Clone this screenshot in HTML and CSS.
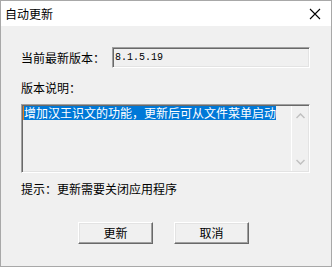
FILE: index.html
```html
<!DOCTYPE html>
<html lang="zh">
<head>
<meta charset="utf-8">
<link rel="stylesheet" href="styles.css">
</head>
<body>
<div class="window">
  <div class="titlebar">
    <span class="title">自动更新</span>
    <svg class="close" width="12" height="12" viewBox="0 0 12 12"><path d="M1 1L11 11M11 1L1 11" stroke="#000" stroke-width="1.1"/></svg>
  </div>
  <div class="content">
    <div class="row">
      <span class="label">当前最新版本：</span>
      <div class="field">8.1.5.19</div>
    </div>
    <div class="line">版本说明：</div>
    <div class="memo">
      <div class="memo-text"><span class="sel">增加汉王识文的功能，更新后可从文件菜单启动</span></div>
      <div class="scroll">
        <svg width="9" height="6" viewBox="0 0 9 6"><path d="M0.5 5L4.5 1L8.5 5" fill="none" stroke="#c0c0c0" stroke-width="1.5"/></svg>
        <svg width="9" height="6" viewBox="0 0 9 6"><path d="M0.5 1L4.5 5L8.5 1" fill="none" stroke="#c0c0c0" stroke-width="1.5"/></svg>
      </div>
    </div>
    <div class="line hint">提示：更新需要关闭应用程序</div>
    <div class="buttons">
      <div class="btn">更新</div>
      <div class="btn">取消</div>
    </div>
  </div>
</div>
</body>
</html>
```
FILE: styles.css
```css
* { box-sizing: border-box; }
html, body { margin: 0; padding: 0; }
body {
  width: 332px;
  height: 267px;
  font-family: "Noto Sans CJK SC", "Noto Sans", sans-serif;
  font-size: 12px;
  color: #000;
}
.window {
  width: 332px;
  height: 267px;
  border: 1px solid #a8a8a8;
  background: #f0f0f0;
  display: flex;
  flex-direction: column;
}
.titlebar {
  height: 25px;
  background: #fff;
  display: flex;
  align-items: center;
  justify-content: space-between;
  padding: 0 10px 0 4px;
  flex: none;
}
.title { font-size: 12px; line-height: 16px; }
.close { display: block; }
.content {
  padding: 21px 0 0 20px;
}
.row {
  display: flex;
  align-items: center;
  height: 21px;
}
.label {
  width: 91px;
  line-height: 16px;
}
.field {
  width: 198px;
  height: 21px;
  border-style: solid;
  border-width: 1px;
  border-color: #a0a0a0 #fff #fff #a0a0a0;
  box-shadow: inset 1px 1px 0 #696969, inset -1px -1px 0 #e3e3e3;
  font-family: "Liberation Mono", monospace;
  font-size: 10px;
  line-height: 19px;
  padding-left: 2px;
  letter-spacing: 0;
}
.line {
  margin-top: 12px;
  line-height: 16px;
  height: 16px;
}
.memo {
  margin-top: 8px;
  width: 289px;
  height: 69px;
  border-style: solid;
  border-width: 1px;
  border-color: #a0a0a0 #fff #fff #a0a0a0;
  box-shadow: inset 1px 1px 0 #696969, inset -1px -1px 0 #e3e3e3;
  display: flex;
  padding: 1px 1px 1px 1px;
}
.memo-text {
  flex: 1;
  padding-left: 0;
  line-height: 14px;
}
.sel {
  background: #0078d7;
  color: #fff;
  box-shadow: inset 1px 0 0 #e8801c;
  display: inline-block;
  height: 14px;
  padding-left: 1px;
}
.scroll {
  width: 17px;
  border-left: 1px solid #fff;
  display: flex;
  flex-direction: column;
  justify-content: space-between;
  align-items: center;
  padding: 7px 0 6px;
}
.scroll svg { display: block; }
.hint { margin-top: 8px; }
.buttons {
  margin-top: 25px;
  padding-left: 57px;
  display: flex;
  gap: 21px;
}
.btn {
  width: 75px;
  height: 22px;
  border-style: solid;
  border-width: 1px;
  border-color: #fff #696969 #696969 #fff;
  box-shadow: inset -1px -1px 0 #a0a0a0, inset 1px 1px 0 #e3e3e3;
  display: flex;
  align-items: center;
  justify-content: center;
  line-height: 16px;
}
```
